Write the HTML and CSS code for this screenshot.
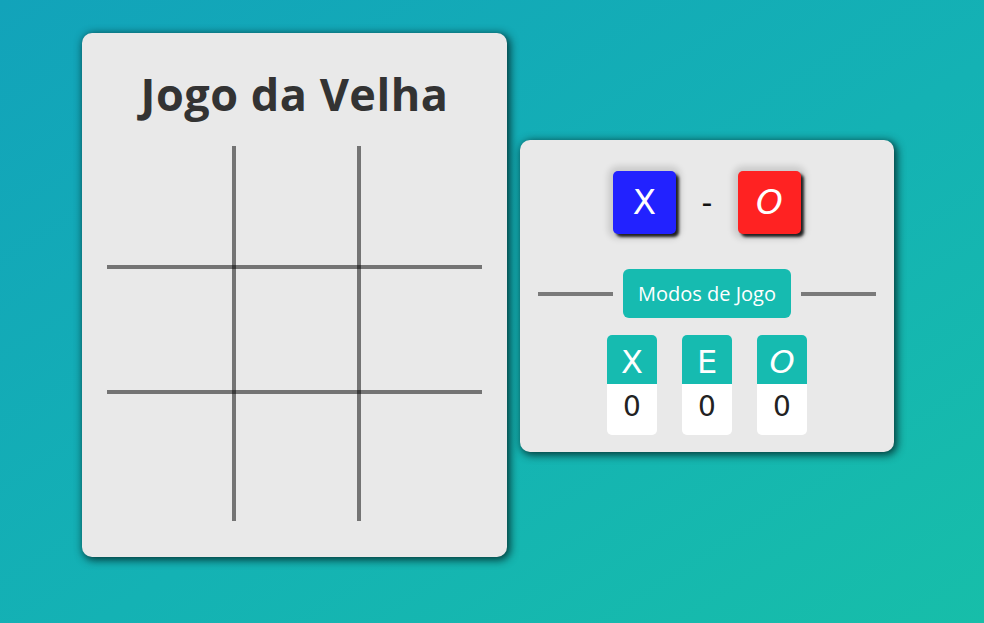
FILE: index.html
```html
<!DOCTYPE html>
<html lang="pt">
<head>
<meta charset="utf-8">
<title>Jogo da Velha</title>
<link rel="stylesheet" href="styles.css">
</head>
<body>
<main class="stage">
  <section class="card board-card">
    <h1 class="title">Jogo da Velha</h1>
    <svg class="board" width="375" height="375" viewBox="0 0 375 375">
      <rect x="125" y="0" width="4" height="375" fill="rgba(0,0,0,0.5)"/>
      <rect x="250" y="0" width="4" height="375" fill="rgba(0,0,0,0.5)"/>
      <rect x="0" y="119" width="375" height="4" fill="rgba(0,0,0,0.5)"/>
      <rect x="0" y="244" width="375" height="4" fill="rgba(0,0,0,0.5)"/>
    </svg>
  </section>
  <section class="card side-card">
    <div class="turn">
      <div class="tile tile-x">X</div>
      <span class="dash">-</span>
      <div class="tile tile-o">O</div>
    </div>
    <div class="divider">
      <span class="rule"></span>
      <button class="modes">Modos de Jogo</button>
      <span class="rule"></span>
    </div>
    <div class="scores">
      <div class="score"><div class="score-head">X</div><div class="score-val">0</div></div>
      <div class="score"><div class="score-head">E</div><div class="score-val">0</div></div>
      <div class="score"><div class="score-head italic">O</div><div class="score-val">0</div></div>
    </div>
  </section>
</main>
</body>
</html>
```
FILE: styles.css
```css
html, body {
  margin: 0;
  height: 100%;
}
body {
  background: linear-gradient(to bottom right, #12a3ba 0%, #14b2b4 55%, #17bea9 100%);
  font-family: "Comic Sans MS", "Open Sans", sans-serif;
  overflow: hidden;
}
.stage {
  display: flex;
  align-items: flex-start;
  gap: 13px;
  padding: 33px 0 0 82px;
}
.card {
  background: #e9e9e9;
  border-radius: 10px;
  box-shadow: 2px 2px 8px 1px rgba(0, 35, 35, 0.85);
}
.board-card {
  width: 425px;
  height: 524px;
  box-sizing: border-box;
  padding: 0 25px;
  display: flex;
  flex-direction: column;
  align-items: center;
}
.title {
  margin: 0;
  height: 113px;
  line-height: 122px;
  font-size: 45px;
  font-weight: 700;
  color: #333;
  letter-spacing: 0.5px;
}
.board {
  display: block;
}
.side-card {
  margin-top: 107px;
  width: 374px;
  height: 312px;
  box-sizing: border-box;
  padding-top: 31px;
  display: flex;
  flex-direction: column;
  align-items: center;
}
.turn {
  display: flex;
  align-items: center;
}
.tile {
  width: 63px;
  height: 63px;
  border-radius: 5px;
  color: #fff;
  font-family: "DejaVu Sans", sans-serif;
  font-size: 34px;
  line-height: 63px;
  text-align: center;
  box-shadow: 3px 3px 3px rgba(0, 0, 0, 0.85), 0 0 6px 5px rgba(0, 0, 0, 0.13);
}
.tile-x { background: #2222ff; }
.tile-o { background: #ff2222; font-style: italic; }
.dash {
  width: 62px;
  text-align: center;
  font-size: 30px;
  color: #111;
  font-family: "DejaVu Sans", sans-serif;
}
.divider {
  margin-top: 35px;
  display: flex;
  align-items: center;
  gap: 10px;
}
.rule {
  width: 75px;
  height: 4px;
  background: #7a7a7a;
}
.modes {
  width: 168px;
  height: 49px;
  border: 0;
  border-radius: 6px;
  background: #16bbb0;
  color: #fff;
  font-family: "Comic Sans MS", "Open Sans", sans-serif;
  font-size: 20px;
  padding: 0;
}
.scores {
  margin-top: 17px;
  display: flex;
  gap: 25px;
}
.score {
  width: 50px;
  border-radius: 5px;
  overflow: hidden;
  background: #fff;
}
.score-head {
  height: 49px;
  background: #16bbb0;
  color: #fff;
  font-family: "DejaVu Sans", sans-serif;
  font-size: 32px;
  line-height: 54px;
  text-align: center;
}
.score-head.italic { font-style: italic; }
.score-val {
  height: 51px;
  color: #222;
  font-family: "DejaVu Sans", sans-serif;
  font-size: 28px;
  line-height: 46px;
  text-align: center;
}
```
